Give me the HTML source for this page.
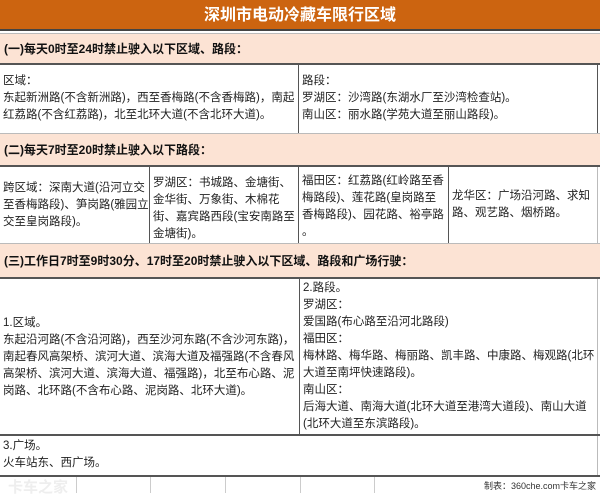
<!DOCTYPE html>
<html><head><meta charset="utf-8"><style>
*{margin:0;padding:0;box-sizing:border-box}
body{width:600px;height:493px;background:#fff;position:relative;overflow:hidden;font-family:"Liberation Sans","Noto Sans CJK SC",sans-serif;font-size:11.5px;color:#222}
.a{position:absolute}
.t{left:0;top:0;width:600px;height:31px;background:#cc6410;color:#fff;font-weight:bold;font-size:16px;text-align:center;line-height:31px;border-bottom:2px solid #444}
.h{left:0;width:600px;background:#fce3d4;font-weight:bold;font-size:12px;padding-left:4px;color:#111;border-bottom:2px solid #555;border-top:1px solid #bbb}
.c{line-height:17px;padding-left:3px;border-right:1px solid #555;overflow:hidden}
.v{display:flex;flex-direction:column;justify-content:center}
</style></head><body>
<div class="a t">深圳市电动冷藏车限行区域</div>
<div class="a h" style="top:33px;height:32px;line-height:30px">(一)每天0时至24时禁止驶入以下区域、路段：</div>
<div class="a c" style="left:0;top:65px;width:299px;height:68px;padding-top:8px">区域：<br>东起新洲路(不含新洲路)，西至香梅路(不含香梅路)，南起红荔路(不含红荔路)，北至北环大道(不含北环大道)。</div>
<div class="a c" style="left:299px;top:65px;width:299px;height:68px;padding-top:8px">路段：<br>罗湖区：沙湾路(东湖水厂至沙湾检查站)。<br>南山区：丽水路(学苑大道至丽山路段)。</div>
<div class="a h" style="top:133px;height:34px;line-height:32px">(二)每天7时至20时禁止驶入以下路段：</div>
<div class="a c v" style="left:0;top:167px;width:150px;height:76px">跨区域：深南大道(沿河立交至香梅路段)、笋岗路(雅园立交至皇岗路段)。</div>
<div class="a c" style="left:150px;top:167px;width:149px;height:76px;padding-top:8px">罗湖区：书城路、金塘街、金华街、万象街、木棉花街、嘉宾路西段(宝安南路至金塘街)。</div>
<div class="a c" style="left:299px;top:167px;width:150px;height:76px;padding-top:6px;white-space:nowrap">福田区：红荔路(红岭路至香<br>梅路段)、莲花路(皇岗路至<br>香梅路段)、园花路、裕亭路<br>。</div>
<div class="a c v" style="left:449px;top:167px;width:149px;height:76px;border-right:1px solid #bbb">龙华区：广场沿河路、求知路、观艺路、烟桥路。</div>
<div class="a h" style="top:243px;height:36px;line-height:34px">(三)工作日7时至9时30分、17时至20时禁止驶入以下区域、路段和广场行驶：</div>
<div class="a c v" style="left:0;top:279px;width:300px;height:156px">1.区域。<br>东起沿河路(不含沿河路)，西至沙河东路(不含沙河东路)，南起春风高架桥、滨河大道、滨海大道及福强路(不含春风高架桥、滨河大道、滨海大道、福强路)，北至布心路、泥岗路、北环路(不含布心路、泥岗路、北环大道)。</div>
<div class="a c" style="left:300px;top:279px;width:298px;height:156px;padding-top:1px;border-right:1px solid #bbb">2.路段。<br>罗湖区：<br>爱国路(布心路至沿河北路段)<br>福田区：<br>梅林路、梅华路、梅丽路、凯丰路、中康路、梅观路(北环大道至南坪快速路段)。<br>南山区：<br>后海大道、南海大道(北环大道至港湾大道段)、南山大道(北环大道至东滨路段)。</div>
<div class="a" style="left:0;top:434px;width:600px;height:2px;background:#555"></div>
<div class="a c" style="left:0;top:436px;width:598px;height:40px;padding-top:2px;border-right:1px solid #bbb">3.广场。<br>火车站东、西广场。</div>
<div class="a" style="left:0;top:475px;width:600px;height:2px;background:#555"></div>
<div class="a" style="left:76px;top:477px;width:1px;height:16px;background:#ccc"></div>
<div class="a" style="left:150px;top:477px;width:1px;height:16px;background:#ccc"></div>
<div class="a" style="left:225px;top:477px;width:1px;height:16px;background:#ccc"></div>
<div class="a" style="left:300px;top:477px;width:1px;height:16px;background:#ccc"></div>
<div class="a" style="left:374px;top:477px;width:1px;height:16px;background:#ccc"></div>
<div class="a" style="right:4px;top:479px;font-size:9px;color:#333">制表：360che.com卡车之家</div>
<div class="a" style="left:8px;top:476px;font-size:15px;font-weight:bold;color:#eee">卡车之家</div>
</body></html>
